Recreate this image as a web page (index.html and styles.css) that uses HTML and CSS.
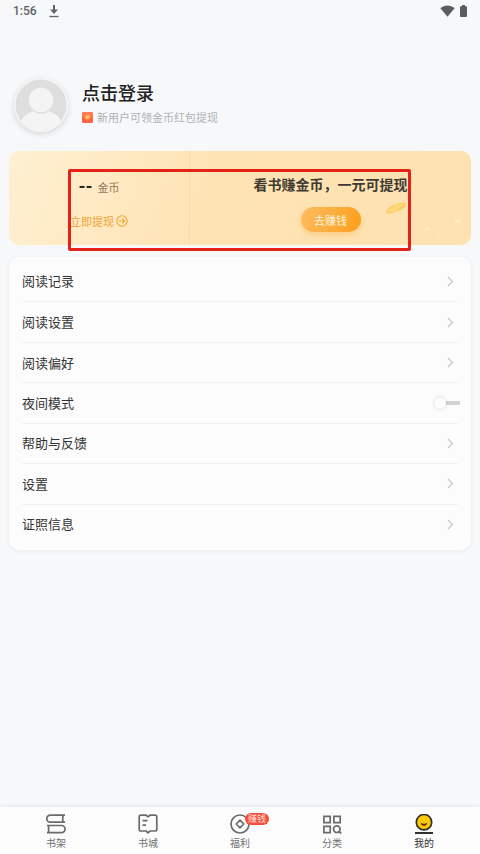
FILE: index.html
```html
<!DOCTYPE html>
<html lang="zh-CN">
<head>
<meta charset="utf-8">
<meta name="viewport" content="width=device-width, initial-scale=1">
<title>我的</title>
<link rel="stylesheet" href="styles.css">
</head>
<body>
<header class="status">
  <span class="status-time">1:56</span>
  <svg class="status-download" width="10" height="13" viewBox="0 0 10 13" fill="none" stroke="#626466"><path d="M5 0v7" stroke-width="2"/><path d="M1 4.500h8L5 9z" fill="#626466" stroke="none"/><path d="M.5 11.5h9" stroke-width="1.3"/></svg>
  <svg class="status-wifi" width="15" height="12" viewBox="0 0 15 12"><path d="M.4 3.2C4.500 -.4 10.500 -.4 14.600 3.200L7.500 11.700z" fill="#5b5d5f"/></svg>
  <svg width="7" height="12" viewBox="0 0 7 12"><path d="M2 0h3v1.200h1.200q.8 0 .8.800v9q0 1-1 1H1q-1 0-1-1V2q0-.8.8-.8H2z" fill="#5b5d5f"/></svg>
</header>

<main class="page">
  <section class="profile">
    <svg class="avatar" width="54" height="54" viewBox="0 0 54 54">
      <defs><clipPath id="disc"><circle cx="27" cy="27" r="25.500"/></clipPath></defs>
      <circle cx="27" cy="27" r="27" fill="#f4f4f5"/>
      <g clip-path="url(#disc)">
        <rect width="54" height="54" fill="#dedede"/>
        <ellipse cx="27" cy="50" rx="22" ry="18" fill="#f4f4f4"/>
        <circle cx="27" cy="22" r="13" fill="#f4f4f4" stroke="#dedede" stroke-width="1.500"/>
      </g>
    </svg>
    <div class="profile-text">
      <a class="login" href="#login">点击登录</a>
      <p class="promo">
        <svg width="11" height="11" viewBox="0 0 11 11"><rect width="11" height="11" rx="1.500" fill="#fa6546"/><path d="M0 1.500Q0 0 1.500 0h8Q11 0 11 1.500V4Q5.500 9 0 4z" fill="#ff7c55"/><circle cx="5.500" cy="5.300" r="2.300" fill="#ffc34a"/></svg>
        <span>新用户可领金币红包提现</span>
      </p>
    </div>
  </section>

  <section class="wallet">
    <div class="balance">
      <p class="coins"><strong>--</strong><span>金币</span></p>
      <a class="withdraw" href="#withdraw"><span>立即提现</span>
        <svg width="12" height="12" viewBox="0 0 12 12" fill="none" stroke="#f3a52f" stroke-width="1.100"><circle cx="6" cy="6" r="5.200"/><path d="M3 6h5.500M6.300 3.700 8.600 6 6.300 8.300"/></svg>
      </a>
    </div>
    <div class="earn">
      <h2>看书赚金币，一元可提现</h2>
      <button class="earn-button" type="button">去赚钱</button>
    </div>
    <svg class="sparkles" width="82" height="44" viewBox="0 0 82 44">
      <defs><linearGradient id="gold"><stop stop-color="#f8c95c"/><stop offset=".5" stop-color="#ffd67a"/><stop offset="1" stop-color="#f7c750"/></linearGradient></defs>
      <path d="M1 12Q4 5 14 3Q20 2 21 4Q20 9 11 12Q3 15 1 12z" fill="url(#gold)"/>
      <path d="M3 11Q10 10 19 4" stroke="#ffe09a" fill="none"/>
      <ellipse cx="73" cy="21" rx="3" ry="2" fill="#fff0b9"/>
      <ellipse cx="42" cy="29" rx="2.500" ry="1.500" transform="rotate(-20 42 29)" fill="#ffedbb"/>
      <ellipse cx="53" cy="38" rx="2" ry="1" fill="#ffe9bb"/>
    </svg>
    <div class="highlight"></div>
  </section>

  <ul class="menu">
    <li><a href="#history">阅读记录<svg width="7" height="11" viewBox="0 0 7 11"><path d="M1 1l4.500 4.500L1 10"/></svg></a></li>
    <li><a href="#reading">阅读设置<svg width="7" height="11" viewBox="0 0 7 11"><path d="M1 1l4.500 4.500L1 10"/></svg></a></li>
    <li><a href="#preference">阅读偏好<svg width="7" height="11" viewBox="0 0 7 11"><path d="M1 1l4.500 4.500L1 10"/></svg></a></li>
    <li><label for="night">夜间模式</label><input class="switch" id="night" type="checkbox"></li>
    <li><a href="#help">帮助与反馈<svg width="7" height="11" viewBox="0 0 7 11"><path d="M1 1l4.500 4.500L1 10"/></svg></a></li>
    <li><a href="#settings">设置<svg width="7" height="11" viewBox="0 0 7 11"><path d="M1 1l4.500 4.500L1 10"/></svg></a></li>
    <li><a href="#license">证照信息<svg width="7" height="11" viewBox="0 0 7 11"><path d="M1 1l4.500 4.500L1 10"/></svg></a></li>
  </ul>
</main>

<nav class="tabs">
  <a href="#shelf">
    <svg width="20" height="20" viewBox="0 0 20 20" fill="none" stroke="#6b6b6b" stroke-width="1.700" stroke-linejoin="round"><path d="M19 1.200H4.300a3.500 3.500 0 0 0 0 7H19M17.200 1.200q-1 3.500 0 7M1 11.500h14.500a3.600 3.600 0 0 1 0 7.200H1M2.600 11.500v7.200"/></svg>
    <span>书架</span>
  </a>
  <a href="#store">
    <svg width="20" height="20" viewBox="0 0 20 20" fill="none" stroke="#6b6b6b" stroke-width="1.700" stroke-linejoin="round"><path d="M3 1.200h5L10 2.700l2-1.500h5q1.800 0 1.800 1.800v12.200q0 1.800-1.800 1.800h-5L10 18.800 8 17H3q-1.800 0-1.800-1.800V3q0-1.800 1.800-1.800zM4.500 6.700h5M4.500 11.200H8"/></svg>
    <span>书城</span>
  </a>
  <a href="#welfare">
    <svg width="20" height="20" viewBox="0 0 20 20" fill="none" stroke="#6b6b6b" stroke-width="1.700" stroke-linejoin="round"><circle cx="10" cy="10" r="9"/><path d="M10 6.200 13.800 10 10 13.800 6.200 10z"/></svg>
    <span>福利</span>
    <em class="badge">赚钱</em>
  </a>
  <a href="#category">
    <svg width="20" height="20" viewBox="0 0 20 20" fill="none" stroke="#6b6b6b" stroke-width="1.700"><path d="M1.900 2.400h6.300v6.300H1.900zM11.900 2.400h6.300v6.300h-6.300zM1.900 12.400h6.300v6.300H1.900zM17 17.300l2.300 2.200"/><circle cx="14.800" cy="15.200" r="3.300"/></svg>
    <span>分类</span>
  </a>
  <a class="active" href="#me" aria-current="page">
    <svg width="20" height="20" viewBox="0 0 20 20"><circle cx="10" cy="8.200" r="7.700" fill="#fdca08" stroke="#303030" stroke-width="1.700"/><path d="M6.800 8.700Q7.500 12 10 12t3.200-3.300L10 10z" fill="#5a281a"/><path d="M8.500 11.200q1.500-1 3 0-1.500 1-3 0z" fill="#ef4b36"/><path d="M1 19h18" stroke="#303030" stroke-width="2"/></svg>
    <span>我的</span>
  </a>
</nav>
</body>
</html>
```
FILE: styles.css
```css
* {
  box-sizing: border-box;
}

body {
  display: flex;
  flex-direction: column;
  min-height: 100vh;
  margin: 0;
  background: #f6f8fa;
  color: #2d2d2d;
  font-family: "Noto Sans CJK SC", sans-serif;
  font-size: 13px;
  line-height: 20px;
}

h2,
p,
ul {
  margin: 0;
  padding: 0;
}

a {
  color: inherit;
  text-decoration: none;
}

svg {
  flex: none;
}

.status {
  display: flex;
  align-items: center;
  gap: 12px;
  height: 22px;
  padding: 0 13px;
}

.status-time {
  color: #5f6163;
  font-family: Roboto, sans-serif;
  font-size: 12px;
  font-weight: 500;
}

.status-wifi {
  margin-left: auto;
  margin-right: -7px;
}

.page {
  padding: 56px 9px 24px;
}

.profile {
  display: flex;
  align-items: center;
  gap: 14px;
  padding: 0 5px;
}

.avatar {
  border-radius: 50%;
  box-shadow: 0 2px 6px rgba(0, 0, 0, 0.14);
}

.profile-text {
  padding-bottom: 4px;
}

.login {
  display: block;
  color: #222;
  font-size: 18px;
  font-weight: 500;
  line-height: 28px;
}

.promo {
  display: flex;
  align-items: center;
  gap: 4px;
  color: #b0b2b4;
  font-size: 11px;
  line-height: 22px;
}

.wallet {
  position: relative;
  display: grid;
  grid-template-columns: 181fr 281fr;
  height: 94px;
  margin-top: 19px;
  border-radius: 10px;
  background: linear-gradient(110deg, #fff0d2, #fee3b3 45%, #fee1b1);
}

.balance,
.earn {
  display: flex;
  flex-direction: column;
  align-items: center;
}

.balance {
  gap: 14px;
  padding-top: 26px;
  border-right: 1px solid #f5dbad;
}

.coins {
  display: flex;
  align-items: center;
  gap: 5px;
  color: #8a775b;
  font-size: 11px;
}

.coins strong {
  color: #2d281f;
  font-family: Roboto, sans-serif;
  font-size: 18px;
}

.withdraw {
  display: flex;
  align-items: center;
  gap: 2px;
  color: #f1a336;
  font-size: 11px;
}

.earn {
  gap: 13px;
  padding-top: 23px;
}

.earn h2 {
  color: #3f3a32;
  font-size: 14px;
  font-weight: 700;
}

.earn-button {
  width: 60px;
  height: 25px;
  padding: 0;
  border: 0;
  border-radius: 13px;
  background: linear-gradient(110deg, #fcbd62, #fc9f1c);
  box-shadow: 0 3px 5px rgba(246, 168, 57, 0.35);
  color: #fff5df;
  font: inherit;
  font-size: 11px;
}

.sparkles {
  position: absolute;
  top: 49px;
  right: 4px;
}

.highlight {
  position: absolute;
  top: 18px;
  right: 60px;
  bottom: -6px;
  left: 59px;
  border: 3px solid #e42218;
  border-radius: 2px;
  pointer-events: none;
}

.menu {
  display: grid;
  grid-auto-rows: 1fr;
  min-height: 293px;
  margin-top: 12px;
  padding: 4px 13px 6px;
  border-radius: 10px;
  background: #fcfcfc;
  box-shadow: 0 1px 4px rgba(60, 80, 100, 0.07);
  color: #333;
  list-style: none;
}

.menu li {
  display: flex;
  align-items: center;
  justify-content: space-between;
}

.menu li + li {
  border-top: 1px solid #f0f0f0;
}

.menu a {
  display: flex;
  flex: 1;
  align-items: center;
  justify-content: space-between;
  padding-right: 4px;
}

.menu path {
  fill: none;
  stroke: #c5c5c5;
  stroke-width: 1.2;
}

.switch {
  position: relative;
  width: 26px;
  height: 14px;
  margin: 0 -2px 0 0;
  appearance: none;
  background: linear-gradient(#d2d2d2, #d2d2d2) right center / 14px 4px no-repeat;
}

.switch::before {
  position: absolute;
  top: 1px;
  left: 0;
  width: 12px;
  height: 12px;
  border-radius: 50%;
  background: #fdfdfd;
  box-shadow: 0 0 3px rgba(0, 0, 0, 0.18);
  content: "";
}

.switch:checked {
  background-position: left center;
}

.switch:checked::before {
  left: 14px;
}

.tabs {
  display: grid;
  grid-template-columns: repeat(5, 1fr);
  height: 47px;
  margin-top: auto;
  padding: 7px 10px 0;
  background: #fcfcfc;
  box-shadow: 0 -1px 3px rgba(60, 80, 100, 0.09);
}

.tabs a {
  position: relative;
  display: flex;
  flex-direction: column;
  align-items: center;
  color: #707070;
  font-size: 10px;
  line-height: 18px;
}

.tabs .active {
  color: #333;
}

.badge {
  position: absolute;
  top: -1px;
  left: calc(50% + 5px);
  padding: 0 3px;
  border-radius: 6px;
  background: #f94c3b;
  color: #ffe3df;
  font-size: 9px;
  font-style: normal;
  line-height: 12px;
}
```
